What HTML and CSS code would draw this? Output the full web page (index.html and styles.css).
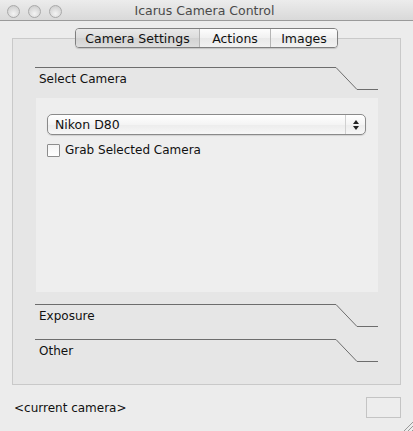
FILE: index.html
```html
<!DOCTYPE html>
<html>
<head>
<meta charset="utf-8">
<link rel="stylesheet" href="styles.css">
</head>
<body>
<div class="window">
  <div class="titlebar">
    <div class="lights">
      <span class="light"></span><span class="light"></span><span class="light"></span>
    </div>
    <div class="title">Icarus Camera Control</div>
  </div>
  <div class="tabs">
    <div class="tab sel">Camera Settings</div>
    <div class="tab">Actions</div>
    <div class="tab last">Images</div>
  </div>
  <div class="panel">
    <div class="sec-head">
      <div class="sec-label">Select Camera</div>
      <svg class="sec-slant" width="42" height="23" viewBox="0 0 42 23"><polyline points="0,0.5 21,22.5 42,22.5" fill="none" stroke="#6d6d6d" stroke-width="1"/></svg>
    </div>
    <div class="sec-body">
      <div class="popup">
        <span class="popup-text">Nikon D80</span>
        <span class="popup-arrows">
          <svg width="8" height="12" viewBox="0 0 8 12"><polygon points="4,1 7,5 1,5" fill="#222"/><polygon points="4,11 7,7 1,7" fill="#222"/></svg>
        </span>
      </div>
      <label class="check"><span class="box"></span>Grab Selected Camera</label>
    </div>
    <div class="sec-head gap">
      <div class="sec-label">Exposure</div>
      <svg class="sec-slant" width="42" height="23" viewBox="0 0 42 23"><polyline points="0,0.5 21,22.5 42,22.5" fill="none" stroke="#6d6d6d" stroke-width="1"/></svg>
    </div>
    <div class="sec-head gap">
      <div class="sec-label">Other</div>
      <svg class="sec-slant" width="42" height="23" viewBox="0 0 42 23"><polyline points="0,0.5 21,22.5 42,22.5" fill="none" stroke="#6d6d6d" stroke-width="1"/></svg>
    </div>
  </div>
  <div class="status">
    <span class="status-text">&lt;current camera&gt;</span>
    <span class="status-box"></span>
  </div>
  <svg class="grip" width="10" height="10" viewBox="0 0 10 10"><line x1="10" y1="1" x2="1" y2="10" stroke="#999"/><line x1="10" y1="5" x2="5" y2="10" stroke="#999"/><line x1="10" y1="9" x2="9" y2="10" stroke="#999"/></svg>
</div>
</body>
</html>
```
FILE: styles.css
```css
html, body {
  margin: 0;
  padding: 0;
}
body {
  width: 413px;
  height: 431px;
  overflow: hidden;
  background: #ececec;
  font-family: "DejaVu Sans", "Liberation Sans", sans-serif;
  font-size: 12px;
  color: #111;
}
.window {
  position: relative;
  width: 413px;
  height: 431px;
  display: flex;
  flex-direction: column;
}
.titlebar {
  height: 21px;
  box-sizing: border-box;
  border-bottom: 1px solid #9a9a9a;
  background: linear-gradient(#ececec, #d9d9d9);
  display: flex;
  align-items: center;
  position: relative;
}
.lights {
  display: flex;
  gap: 8px;
  padding-left: 7px;
  padding-top: 2px;
}
.light {
  width: 13px;
  height: 13px;
  box-sizing: border-box;
  border-radius: 50%;
  border: 1px solid #a9a9a9;
  background: radial-gradient(circle at 50% 70%, #f4f4f4, #d4d4d4 70%, #c4c4c4);
}
.title {
  flex: 1;
  text-align: center;
  margin-left: -66px;
  color: #4a4a4a;
  font-size: 12.5px;
  padding-top: 1px;
}
.tabs {
  display: flex;
  align-self: center;
  margin-top: 7px;
  height: 20px;
  box-sizing: border-box;
  border: 1px solid #7f7f7f;
  border-radius: 4px;
  overflow: hidden;
  position: relative;
  z-index: 1;
  box-shadow: 0 1px 1px rgba(0,0,0,0.15);
}
.tab {
  display: flex;
  align-items: center;
  justify-content: center;
  background: linear-gradient(#fdfdfd, #f1f1f1 50%, #e9e9e9 51%, #f2f2f2);
  border-right: 1px solid #b5b5b5;
  font-size: 12.5px;
}
.tab.sel {
  width: 123px;
  background: linear-gradient(#e9e9e9, #dcdcdc 50%, #d2d2d2 51%, #dedede);
}
.tab:nth-child(2) { width: 70px; }
.tab.last { width: 66px; border-right: none; }
.panel {
  margin: -10px 12px 0 12px;
  height: 347px;
  box-sizing: border-box;
  border: 1px solid #c9c9c9;
  background: #e6e6e6;
  padding: 28px 22px 0 22px;
  display: flex;
  flex-direction: column;
}
.sec-head {
  display: flex;
  height: 23px;
  flex-shrink: 0;
}
.sec-head.gap { margin-top: 12px; }
.sec-label {
  flex: 1;
  border-top: 1px solid #6d6d6d;
  padding: 4px 0 0 4px;
  font-size: 12px;
}
.sec-slant { display: block; flex-shrink: 0; }
.sec-body {
  margin: 8px 0 0 1px;
  height: 194px;
  background: #eeeeee;
  padding: 16px 12px 0 11px;
  box-sizing: border-box;
}
.popup {
  height: 21px;
  box-sizing: border-box;
  border: 1px solid #8a8a8a;
  border-radius: 5px;
  background: linear-gradient(#ffffff, #f4f4f4 50%, #ececec 51%, #f7f7f7);
  display: flex;
  align-items: center;
  box-shadow: 0 1px 1px rgba(0,0,0,0.12);
}
.popup-text {
  flex: 1;
  padding-left: 7px;
  font-size: 12.5px;
}
.popup-arrows {
  width: 19px;
  height: 100%;
  border-left: 1px solid #d0d0d0;
  display: flex;
  align-items: center;
  justify-content: center;
}
.check {
  display: flex;
  align-items: center;
  margin-top: 8px;
  font-size: 12px;
}
.box {
  width: 13px;
  height: 13px;
  box-sizing: border-box;
  border: 1px solid #8d8d8d;
  background: linear-gradient(#f4f4f4, #ffffff);
  margin-right: 5px;
  border-radius: 1px;
}
.status {
  display: flex;
  align-items: center;
  justify-content: space-between;
  margin-top: 12px;
  height: 21px;
  padding: 0 12px 0 14px;
}
.status-text { font-size: 12px; }
.status-box {
  width: 35px;
  height: 21px;
  box-sizing: border-box;
  border: 1px solid #c4c4c4;
  background: #ededed;
}
.grip {
  position: absolute;
  right: 0;
  bottom: 0;
}
```
